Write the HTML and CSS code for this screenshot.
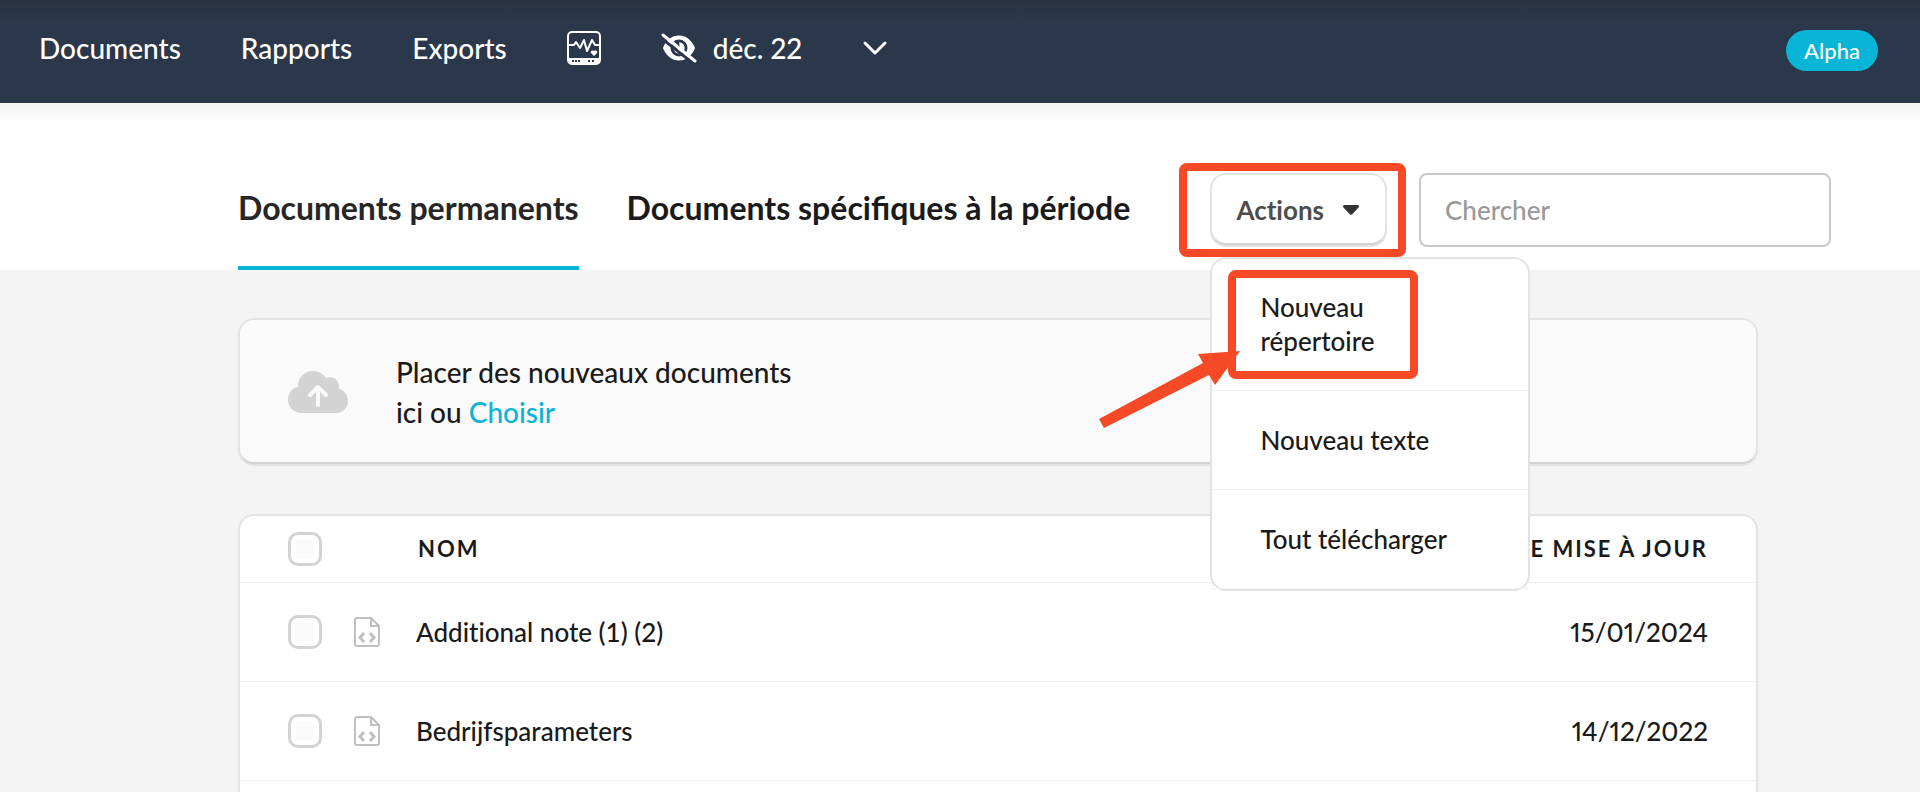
FILE: index.html
```html
<!DOCTYPE html>
<html lang="fr">
<head>
  <meta charset="UTF-8">
  <meta name="viewport" content="width=device-width, initial-scale=1.0">
  <title>Documents permanents</title>
  <link rel="stylesheet" href="styles.css">
</head>
<body>
  <header class="topbar">
    <nav class="main-nav">
      <a href="#documents">Documents</a>
      <a href="#rapports">Rapports</a>
      <a href="#exports">Exports</a>
      <a href="#monitor" class="icon-link" aria-label="Monitoring">
        <svg width="34" height="34" viewBox="0 0 34 34" fill="none">
          <path fill="#fff" fill-rule="evenodd" d="M5 0h24a5 5 0 0 1 5 5v24a5 5 0 0 1-5 5H5a5 5 0 0 1-5-5V5a5 5 0 0 1 5-5zM5 2a3 3 0 0 0-3 3v22h30V5a3 3 0 0 0-3-3zM5 29v2h2v-2zM8 29v2h2v-2zM11 29v2h2v-2zM21 29v2h2v-2zM25 29v2h2v-2z"/>
          <path stroke="#fff" stroke-width="2" stroke-linejoin="round" d="M1 14h6l2-3 4 6 4-8 3 11 5-11 3 5h5"/>
          <path fill="#fff" d="M27 25l-3-3c-1-2 1-3 3-2 2-1 4 0 3 2z"/>
        </svg>
      </a>
    </nav>
    <button type="button" class="period">
      <svg width="36" height="30" viewBox="0 0 36 30" fill="none">
        <path fill="#fff" fill-rule="evenodd" d="M18 2.500C26 2.500 32 9 34 15C32 21 26 27.500 18 27.500C10 27.500 4 21 2 15C4 9 10 2.500 18 2.500zM18 6.500a8.500 8.500 0 1 0 0 17a8.500 8.500 0 1 0 0-17z"/>
        <path fill="#fff" d="M18 9.500a5.500 5.500 0 1 1-5 7.500c3 0 5.500-2 5.500-4.500c0-1-.2-2-.5-3z"/>
        <path stroke="#2b374a" stroke-width="3" d="M-1 4l34 27"/>
        <path stroke="#fff" stroke-width="3" stroke-linecap="round" d="M2 2l32 26"/>
      </svg>
      <span>déc. 22</span>
      <svg class="chevron" width="26" height="16" viewBox="0 0 26 16" fill="none" stroke="#fff" stroke-width="3" stroke-linecap="round" stroke-linejoin="round">
        <path d="M3 3l10 10L23 3"/>
      </svg>
    </button>
    <span class="badge">Alpha</span>
  </header>

  <div class="toolbar">
    <nav class="tabs">
      <a href="#permanents" class="tab active">Documents permanents</a>
      <a href="#periode" class="tab">Documents spécifiques à la période</a>
    </nav>

    <div class="actions">
      <button type="button" class="actions-button">
        Actions
        <svg width="16" height="10" viewBox="0 0 16 10"><path fill="#333" d="M1.500 0h13c1.400 0 1.900 1.500 1 2.500l-6 6.600c-.9.900-2.100.9-3 0l-6-6.600C-.4 1.500.1 0 1.500 0z"/></svg>
      </button>
      <div class="highlight highlight-button"></div>

      <div class="menu">
        <button type="button" class="menu-item">Nouveau répertoire</button>
        <button type="button" class="menu-item">Nouveau texte</button>
        <button type="button" class="menu-item">Tout télécharger</button>
        <div class="highlight highlight-item"></div>
        <svg class="arrow" width="142" height="78" viewBox="0 0 142 78">
          <path fill="#f54a25" d="M141 0L99 3l5 9L0 68l5 9L110 24l6 10z"/>
        </svg>
      </div>
    </div>

    <input type="search" class="search" placeholder="Chercher" aria-label="Chercher">
  </div>

  <main class="content">
    <section class="dropzone">
      <svg width="60" height="42" viewBox="0 0 60 42" fill="none">
        <path fill="#d3d3d3" d="M14 42C6 42 0 36 0 29c0-7 4-12 10-13C9 7 16 0 25 0c6 0 10 3 13 7c7-3 14 2 13 11c5 1 9 6 9 12c0 7-5 12-12 12z"/>
        <path stroke="#fafafa" stroke-width="4" stroke-linecap="round" stroke-linejoin="round" d="M30 34V16M22 24l8-8 8 8"/>
      </svg>
      <p>Placer des nouveaux documents<br>ici ou <a href="#choisir">Choisir</a></p>
    </section>

    <div class="card">
      <table class="files">
        <thead>
          <tr>
            <th class="col-check"><input type="checkbox" aria-label="Tout sélectionner"></th>
            <th class="col-icon"></th>
            <th class="col-name">Nom</th>
            <th class="col-date">Date de mise à jour</th>
          </tr>
        </thead>
        <tbody>
          <tr>
            <td class="col-check"><input type="checkbox" aria-label="Additional note (1) (2)"></td>
            <td class="col-icon">
              <svg width="26" height="30" viewBox="0 0 26 30" fill="none" stroke="#c0c0c0" stroke-width="2">
                <path d="M17 1H3a2 2 0 0 0-2 2v24a2 2 0 0 0 2 2h20a2 2 0 0 0 2-2V9zM17 1v8h8"/>
                <path stroke-width="3" d="M10 16l-4 4.500 4 4.500M16 16l4 4.500-4 4.500"/>
              </svg>
            </td>
            <td class="col-name">Additional note (1) (2)</td>
            <td class="col-date">15/01/2024</td>
          </tr>
          <tr>
            <td class="col-check"><input type="checkbox" aria-label="Bedrijfsparameters"></td>
            <td class="col-icon">
              <svg width="26" height="30" viewBox="0 0 26 30" fill="none" stroke="#c0c0c0" stroke-width="2">
                <path d="M17 1H3a2 2 0 0 0-2 2v24a2 2 0 0 0 2 2h20a2 2 0 0 0 2-2V9zM17 1v8h8"/>
                <path stroke-width="3" d="M10 16l-4 4.500 4 4.500M16 16l4 4.500-4 4.500"/>
              </svg>
            </td>
            <td class="col-name">Bedrijfsparameters</td>
            <td class="col-date">14/12/2022</td>
          </tr>
        </tbody>
      </table>
    </div>
  </main>
</body>
</html>
```
FILE: styles.css
```css
* {
  box-sizing: border-box;
}

body {
  margin: 0;
  height: 100vh;
  overflow: hidden;
  display: flex;
  flex-direction: column;
  background-color: #f4f4f4;
  color: #1a1a1a;
  font-family: Lato, "Liberation Sans", sans-serif;
  font-size: 26px;
  font-weight: 500;
}

button,
input {
  font-family: inherit;
  font-size: inherit;
  font-weight: inherit;
  color: inherit;
}

button {
  cursor: pointer;
}

a {
  color: inherit;
  text-decoration: none;
}

svg {
  display: block;
}

/* Top bar */
.topbar {
  display: flex;
  align-items: center;
  padding: 30px 42px 32px 39px;
  background: linear-gradient(#283243, #2b374a 20px);
  color: #fff;
  font-size: 28px;
}

.main-nav {
  display: flex;
  align-items: center;
  gap: 60px;
  padding-bottom: 6px;
}

.period {
  display: flex;
  align-items: center;
  gap: 16px;
  margin-left: 60px;
  padding: 0 0 6px;
  border: 0;
  background: none;
  font-variant-numeric: proportional-nums;
}

.chevron {
  margin-left: 44px;
}

.badge {
  margin-left: auto;
  padding: 0 18px;
  border-radius: 24px;
  background-color: #08b5d6;
  font-size: 22px;
  line-height: 41px;
}

/* Tabs, actions and search */
.toolbar {
  display: flex;
  align-items: flex-start;
  gap: 32px;
  padding: 70px 89px 0 238px;
  background: linear-gradient(#f1f1f1, #fff 18px);
}

.tabs {
  display: flex;
  flex: 1;
  gap: 48px;
  padding-top: 15px;
}

.tab {
  padding-bottom: 38px;
  border-bottom: 4px solid transparent;
  font-size: 32px;
  font-weight: 700;
  line-height: 40px;
  white-space: nowrap;
}

.tab.active {
  border-color: #08b5d6;
  color: #262626;
}

.actions {
  position: relative;
}

.actions-button {
  display: flex;
  align-items: center;
  gap: 19px;
  height: 72px;
  padding: 2px 26px 0 24px;
  border: 2px solid #e3e3e3;
  border-bottom-color: #d3d3d3;
  border-radius: 16px;
  box-shadow: 0 2px 0 #e3e3e3;
  background-color: #fff;
  color: #4d4d4d;
  font-weight: 700;
  font-variant-ligatures: none;
}

.search {
  width: 412px;
  height: 74px;
  padding: 0 24px;
  border: 2px solid #c8c8c8;
  border-radius: 8px;
  background-color: #fff;
}

.search::placeholder {
  color: #999;
}

.menu {
  position: absolute;
  top: 84px;
  left: 0;
  z-index: 2;
  width: 320px;
  border: 2px solid #e3e3e3;
  border-radius: 16px;
  background-color: #fff;
}

.menu-item {
  display: block;
  width: 100%;
  padding: 31px 64px 32px 48px;
  border: 0;
  border-bottom: 1px solid #f1f1f1;
  background: none;
  line-height: 34px;
  text-align: left;
}

.menu-item + .menu-item {
  padding-top: 32px;
}

/* Red markers */
.highlight {
  position: absolute;
  border: 8px solid #f54a25;
  border-radius: 8px;
  pointer-events: none;
}

.highlight-button {
  top: -10px;
  left: -31px;
  z-index: 3;
  width: 227px;
  height: 94px;
}

.highlight-item {
  top: 11px;
  left: 16px;
  width: 190px;
  height: 109px;
}

.arrow {
  position: absolute;
  top: 92px;
  left: -113px;
}

/* Content */
.content {
  display: flex;
  flex: 1;
  flex-direction: column;
  gap: 50px;
  min-height: 0;
  padding: 48px 162px 0 238px;
  overflow: hidden;
}

.dropzone {
  display: flex;
  flex-shrink: 0;
  align-items: center;
  gap: 48px;
  padding: 32px 48px 30px;
  border: 2px solid #e3e3e3;
  border-bottom-color: #d3d3d3;
  border-radius: 16px;
  box-shadow: 0 2px 0 #e3e3e3;
  background-color: #fafafa;
  font-size: 28px;
  line-height: 40px;
}

.dropzone p {
  margin: 0;
}

.dropzone a {
  color: #08b5d6;
}

.card {
  flex: 1;
  border: 2px solid #e3e3e3;
  border-bottom: 0;
  border-radius: 16px 16px 0 0;
  background-color: #fff;
}

.files {
  width: 100%;
  border-collapse: collapse;
}

.files tr {
  border-bottom: 1px solid #f1f1f1;
}

.files th {
  height: 66px;
  padding: 0;
  font-size: 22px;
  font-weight: 700;
  letter-spacing: 2px;
  text-align: left;
  text-transform: uppercase;
}

.files td {
  height: 99px;
  padding: 0;
  font-variant-ligatures: none;
}

.files .col-check {
  width: 114px;
  padding-left: 48px;
}

.files .col-icon {
  width: 62px;
}

.files th.col-name {
  padding-left: 2px;
}

.files .col-date {
  padding-right: 48px;
  font-variant-numeric: proportional-nums;
  text-align: right;
}

input[type="checkbox"] {
  appearance: none;
  display: block;
  width: 34px;
  height: 34px;
  margin: 0;
  padding: 5px;
  border: 3px solid #d3d3d3;
  border-radius: 10px;
  background: #fafafa content-box;
}
```
